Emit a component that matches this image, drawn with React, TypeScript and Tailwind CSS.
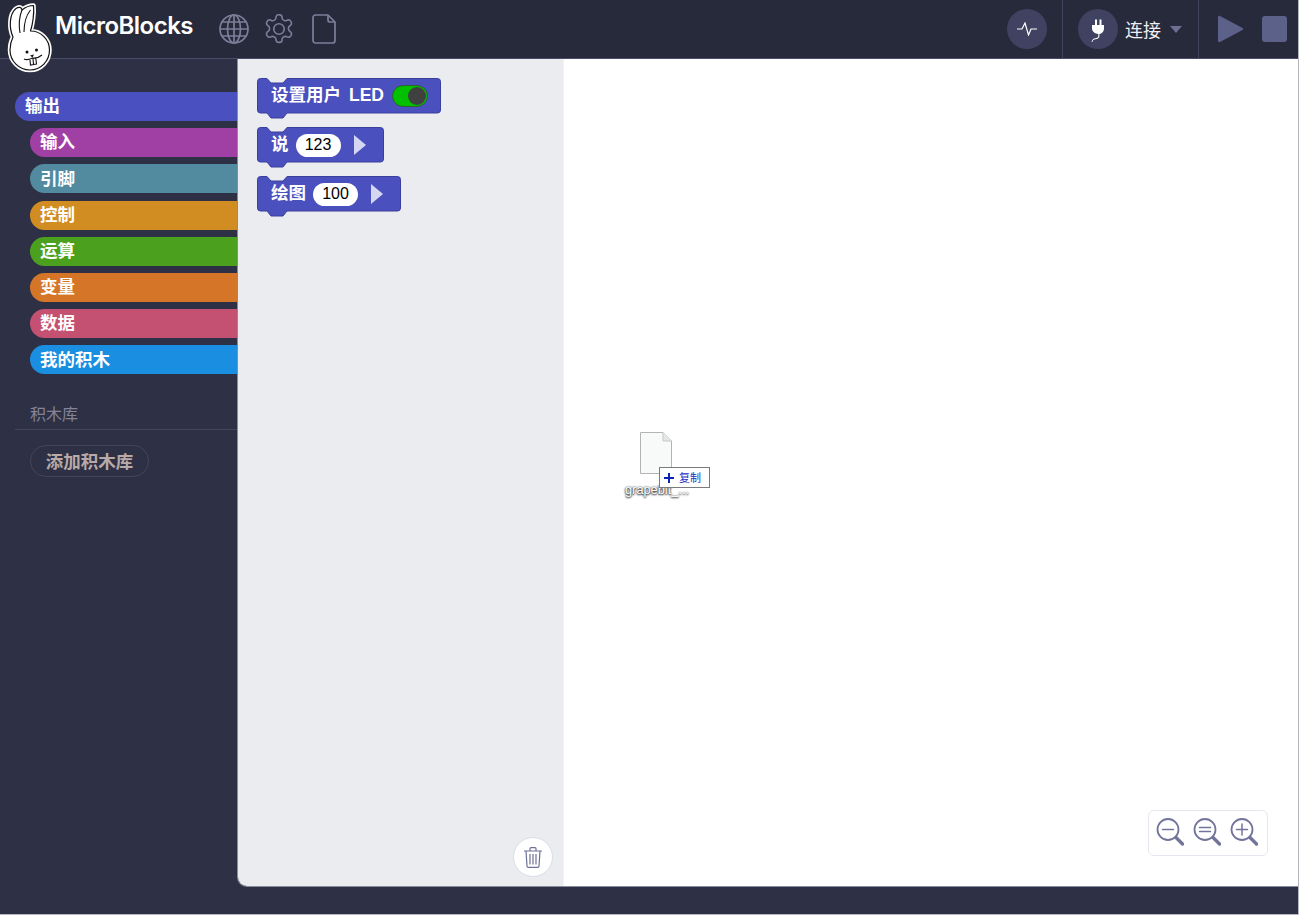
import React from "react";

const cats = [
  ["输出", "bg-[#4a50bf]", "ml-[15px]"],
  ["输入", "bg-[#a040a5]", "ml-[30px]"],
  ["引脚", "bg-[#528a9f]", "ml-[30px]"],
  ["控制", "bg-[#d28d22]", "ml-[30px]"],
  ["运算", "bg-[#4ba11d]", "ml-[30px]"],
  ["变量", "bg-[#d47528]", "ml-[30px]"],
  ["数据", "bg-[#c45072]", "ml-[30px]"],
  ["我的积木", "bg-[#1a8ee0]", "ml-[30px]"],
];

function Rabbit() {
  const d =
    "M13 37 C9 28 9 14 16 8.500 C19 6.500 21.500 7 22 10 C25 7.500 29.500 5.500 33.500 5.500 C34.500 13 32.500 25 30.500 31 C41 31 49.500 39.500 49.500 50 C49.500 61 41 70 30 70 C19 70 10 61 10 50 C10 45 11 41 13 37 Z";
  return (
    <svg width="60" height="76" viewBox="0 0 60 76" className="absolute left-0 top-0">
      <path d={d} fill="#fff" stroke="#fff" strokeWidth="4.500" strokeLinejoin="round" />
      <path d={d} fill="#fff" stroke="#111" strokeWidth="1.200" strokeLinejoin="round" />
      <path d="M20 33 C18.500 24 19.500 16 22 10 M24 32 C24 23 26.500 15 30.500 10" fill="none" stroke="#111" strokeWidth="1.100" />
      <circle cx="27" cy="52" r="1.500" fill="#111" />
      <circle cx="36.500" cy="50" r="1.500" fill="#111" />
      <path d="M30 55.500 L34 54.500 L32.500 57.500 Z" fill="#111" />
      <path d="M24 59 C27 60.500 29.500 59.500 32.500 58 C35.500 58.500 39 57.500 42 55 M30 60 L30.500 65 L33.500 64.500 L33 58.500 M33.500 64.500 L36.500 64 L35.800 58.500" fill="none" stroke="#111" strokeWidth="1.100" />
    </svg>
  );
}

function Globe() {
  return (
    <svg width="30" height="30" viewBox="0 0 30 30" fill="none" stroke="#7c7f9a" strokeWidth="1.700">
      <circle cx="15" cy="15" r="14" />
      <ellipse cx="15" cy="15" rx="6.500" ry="14" />
      <path d="M15 1V29M1 15H29M3 8H27M3 22H27" />
    </svg>
  );
}

function Gear() {
  return (
    <svg width="30" height="30" viewBox="1.700 1.700 20.600 20.600" fill="none" stroke="#7c7f9a" strokeWidth="1.100" strokeLinejoin="round">
      <path d="M12.200 2.200h-.4a1.900 1.900 0 0 0-1.900 1.900v.2a1.900 1.900 0 0 1-1 1.600l-.4.2a1.900 1.900 0 0 1-1.900 0l-.1-.1a1.900 1.900 0 0 0-2.600.7l-.2.4a1.900 1.900 0 0 0 .7 2.600l.1.1a1.900 1.900 0 0 1 1 1.600v.5a1.900 1.900 0 0 1-1 1.700l-.1.1a1.900 1.900 0 0 0-.7 2.600l.2.4a1.900 1.900 0 0 0 2.600.7l.1-.1a1.900 1.900 0 0 1 1.900 0l.4.2a1.900 1.900 0 0 1 1 1.600v.2a1.900 1.900 0 0 0 1.900 1.900h.4a1.900 1.900 0 0 0 1.900-1.900v-.2a1.900 1.900 0 0 1 1-1.600l.4-.2a1.900 1.900 0 0 1 1.900 0l.1.1a1.900 1.900 0 0 0 2.600-.7l.2-.4a1.900 1.900 0 0 0-.7-2.600l-.1-.1a1.900 1.900 0 0 1-1-1.700v-.5a1.900 1.900 0 0 1 1-1.600l.1-.1a1.900 1.900 0 0 0 .7-2.600l-.2-.4a1.900 1.900 0 0 0-2.600-.7l-.1.1a1.900 1.900 0 0 1-1.900 0l-.4-.2a1.900 1.900 0 0 1-1-1.600v-.2a1.900 1.900 0 0 0-1.900-1.900z" />
      <circle cx="12" cy="12" r="3.600" />
    </svg>
  );
}

function FileIcon() {
  return (
    <svg width="24" height="30" viewBox="0 0 24 30" fill="none" stroke="#7c7f9a" strokeWidth="1.700" strokeLinejoin="round">
      <path d="M3.500 1H16L23 8V26.500A2.500 2.500 0 0 1 20.500 29H3.500A2.500 2.500 0 0 1 1 26.500V3.500A2.500 2.500 0 0 1 3.500 1Z" />
      <path d="M16 1V6A2 2 0 0 0 18 8H23" />
    </svg>
  );
}

function Block({ w, children }: { w: number; children: React.ReactNode }) {
  const r = w - 0.5;
  const d = `M3.500 .5 H10 L14 5 H26 L30 .5 H${r - 3} Q${r} .5 ${r} 3.500 V32 Q${r} 35 ${r - 3} 35 H30 L26 40 H14 L10 35 H3.500 Q.5 35 .5 32 V3.500 Q.5 .5 3.500 .5 Z`;
  return (
    <div className="relative h-[41px]" style={{ width: w }}>
      <svg width={w} height="41" className="absolute left-0 top-0">
        <path d={d} fill="#4a50bd" stroke="#3a3f9c" strokeWidth="1" />
      </svg>
      <div className="relative flex h-[35px] items-center pl-[14px] font-['Liberation_Sans','Noto_Sans_CJK_SC',sans-serif] text-[17.500px] font-bold leading-none text-white">
        {children}
      </div>
    </div>
  );
}

function Pill({ v }: { v: string }) {
  return (
    <span className="ml-[7px] mt-[1px] flex h-[23px] w-[45px] items-center justify-center rounded-full bg-white font-['Liberation_Sans',sans-serif] text-[16px] font-normal text-black">
      {v}
    </span>
  );
}

function Arrow() {
  return (
    <svg width="12" height="20" viewBox="0 0 12 20" className="ml-[13px] mt-[1px]">
      <path d="M0 0L12 10L0 20Z" fill="#d5d7f2" />
    </svg>
  );
}

function Mag({ kind }: { kind: "minus" | "equal" | "plus" }) {
  return (
    <svg width="28" height="28" viewBox="0 0 28 28" fill="none" stroke="#72749a" strokeLinecap="round">
      <circle cx="12" cy="11.500" r="10.500" strokeWidth="1.800" />
      <path d="M20 19.500L26.500 26" strokeWidth="3.400" />
      {kind === "minus" && <path d="M6.500 11.500H17.500" strokeWidth="1.500" />}
      {kind === "equal" && <path d="M6.500 9.500H17.500M6.500 13.500H17.500" strokeWidth="1.500" />}
      {kind === "plus" && <path d="M6.500 11.500H17.500M12 6V17" strokeWidth="1.500" />}
    </svg>
  );
}

export default function App() {
  return (
    <div className="relative flex h-[915px] w-[1299px] flex-col overflow-hidden border-b border-r border-[#b5b5bc] bg-[#2e3145]">
      <header className="flex h-[59px] shrink-0 items-center border-b border-[#494b68] bg-[#272a3a]">
        <span className="ml-[55px] w-[164px] pb-[7px] font-['Inter',sans-serif] text-[24px] font-semibold leading-none tracking-[-0.5px] text-white">
          MicroBlocks
        </span>
        <Globe />
        <span className="ml-[15px] flex"><Gear /></span>
        <span className="ml-[18px] flex"><FileIcon /></span>
        <div className="ml-auto flex h-full items-center">
          <span className="flex h-10 w-10 items-center justify-center rounded-full bg-[#3f4260]">
            <svg width="20" height="14" viewBox="0 0 20 14" fill="none" stroke="#fff" strokeWidth="1.200">
              <path d="M0 7H5L8 1L11.500 13L14 7H20" />
            </svg>
          </span>
          <div className="ml-[15px] flex h-full items-center border-x border-[#3f4260] pl-[15px] pr-[16px]">
            <span className="flex h-10 w-10 items-center justify-center rounded-full bg-[#3f4260]">
              <svg width="14" height="26" viewBox="0 2 14 26" fill="#fff" className="mt-[5px]">
                <path d="M4 2.500h2V8H8.500V2.500h2V8H13v3.500c0 3-2.200 5.200-4.600 5.600V19c0 3-3.200 3-5 3.500-1 .3-1.700 1-2 2.500H.6c.3-2 1.300-3.100 2.600-3.500 2-.6 4.100-.4 4.100-2.500v-1.900C4.100 16.700 1 14.500 1 11.500V8h3z" />
              </svg>
            </span>
            <span className="ml-[7px] font-['Noto_Sans_CJK_SC',sans-serif] text-[18px] leading-none text-[#f0f0f4]">连接</span>
            <svg width="12" height="7" viewBox="0 0 12 7" className="ml-[9px]">
              <path d="M0 0H12L6 7Z" fill="#6c6f92" />
            </svg>
          </div>
          <svg width="26" height="28" viewBox="0 0 26 28" className="ml-[19px]">
            <path d="M2 1L24.500 13C25.500 13.700 25.500 14.300 24.500 15L2 27C1 27.500 0 27 0 26V2C0 1 1 .5 2 1Z" fill="#5c6189" />
          </svg>
          <span className="ml-[18px] mr-[11px] h-[26px] w-[25px] rounded-[3px] bg-[#5c6189]" />
        </div>
      </header>

      <div className="flex min-h-0 flex-1">
        <aside className="w-[237px] shrink-0 pt-[33px]">
          <div className="flex flex-col gap-[7.200px]">
            {cats.map(([name, bg, ml]) => (
              <div
                key={name}
                className={`${bg} ${ml} flex h-[29px] items-center rounded-l-full pb-[3px] pl-[10px] font-['Noto_Sans_CJK_SC',sans-serif] text-[17.500px] font-bold leading-none text-white`}
              >
                {name}
              </div>
            ))}
          </div>
          <div className="ml-[15px] mt-[27px] h-[29px] border-b border-[#44465e] pl-[15px] font-['Noto_Sans_CJK_SC',sans-serif] text-[16px] leading-[25px] text-[#82849a]">
            积木库
          </div>
          <div className="ml-[30px] mt-[15px] flex h-[32px] w-[119px] items-center justify-center rounded-full border border-[#43455b] pb-[2px] font-['Noto_Sans_CJK_SC',sans-serif] text-[17.500px] font-bold leading-none text-[#b9aaa8]">
            添加积木库
          </div>
        </aside>

        <main className="mb-[27px] flex min-w-0 flex-1 overflow-hidden rounded-bl-[10px] border-b border-l border-[#8a8c9c]">
          <section className="relative flex w-[326px] shrink-0 flex-col gap-[8px] border-r border-[#f3f3f6] bg-[#ebecf0] pl-[19px] pt-[19px]">
            <Block w={184}>
              <span className="mt-[1px]">设置用户</span>
              <span className="ml-[8px] mt-[1px]">LED</span>
              <span className="ml-[8px] flex h-[22px] w-[36px] items-center justify-end rounded-full border border-[#2f5f30] bg-[#00c000] pr-[1px]">
                <span className="h-[18px] w-[18px] rounded-full bg-[#404040]" />
              </span>
            </Block>
            <Block w={127}>
              <span className="mt-[1px]">说</span>
              <Pill v="123" />
              <Arrow />
            </Block>
            <Block w={144}>
              <span className="mt-[1px]">绘图</span>
              <Pill v="100" />
              <Arrow />
            </Block>
            <button className="absolute left-[275px] top-[778px] flex h-10 w-10 items-center justify-center rounded-full border border-[#dcdce8] bg-white">
              <svg width="18" height="21" viewBox="0 0 18 21" fill="none" stroke="#6e7096" strokeWidth="1.200">
                <path d="M0 4H18M6 4V1.500C6 1 6.500 .6 7 .6H11C11.500 .6 12 1 12 1.500V4M2 4L3 19C3 19.800 3.600 20.400 4.400 20.400H13.600C14.400 20.400 15 19.800 15 19L16 4M6 7V17.500M9 7V17.500M12 7V17.500" />
              </svg>
            </button>
          </section>
          <section className="min-w-0 flex-1 bg-white" />
        </main>
      </div>

      <div className="absolute left-[640px] top-[432px] h-[42px] w-[32px]">
        <svg width="32" height="42" viewBox="0 0 32 42">
          <path d="M.5 .5H23L31.500 9V41.500H.5Z" fill="#f8f9f9" stroke="#b4b4b4" />
          <path d="M23 .5V9H31.500" fill="#e6e6e6" stroke="#c8c8c8" />
        </svg>
      </div>
      <div className="absolute left-[625px] top-[483px] w-[68px] font-['Liberation_Sans',sans-serif] text-[12.800px] leading-[14px] text-white [text-shadow:0_0_2px_#222,0_1px_2px_#222]">
        grapebit_...
      </div>
      <div className="absolute left-[659px] top-[467px] flex h-[21px] w-[51px] items-center border border-[#7a7a7a] bg-white pl-[3px] font-['Noto_Sans_CJK_SC',sans-serif] text-[11px] text-[#1a2fc0]">
        <svg width="12" height="12" viewBox="0 0 12 12" stroke="#0a22b8" strokeWidth="2">
          <path d="M6 1V11M1 6H11" />
        </svg>
        <span className="ml-[4px]">复制</span>
      </div>

      <div className="absolute left-[1148px] top-[810px] flex h-[46px] w-[120px] items-center justify-center gap-[9px] rounded-[6px] border border-[#e6e6ef] bg-white pb-[2px] pr-[2px]">
        <Mag kind="minus" />
        <Mag kind="equal" />
        <Mag kind="plus" />
      </div>

      <Rabbit />
    </div>
  );
}
